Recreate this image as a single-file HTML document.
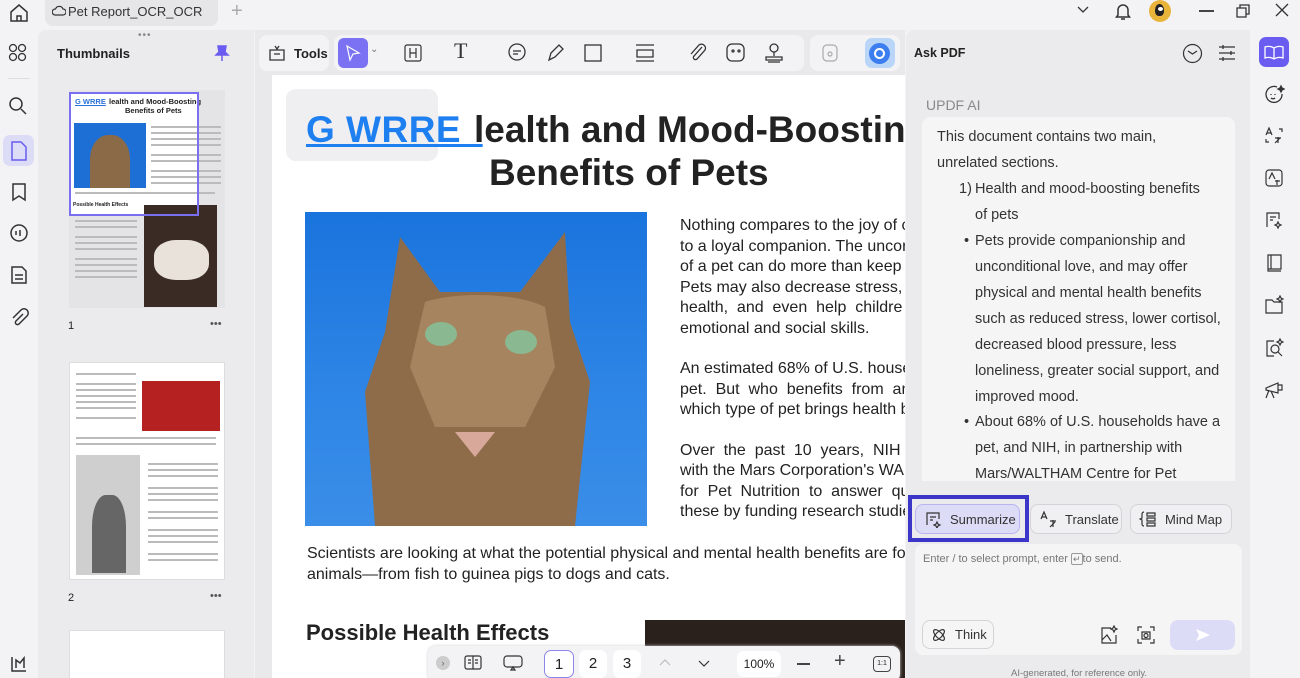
<!DOCTYPE html>
<html><head><meta charset="utf-8"><style>
*{box-sizing:border-box;margin:0;padding:0}
html,body{width:1300px;height:678px;overflow:hidden}
body{background:#f3f3f5;font-family:"Liberation Sans",sans-serif;position:relative;color:#222}
.a{position:absolute}
.ic{position:absolute;fill:none;stroke:#333;stroke-width:1.5}
.doc p{font-size:16px;line-height:20.5px;text-align:justify}
.rt{font-size:14.5px;line-height:26px;color:#333}
.btn{position:absolute;border:1px solid #d4d4d8;border-radius:8px;background:#f0f0f2;font-size:13px;color:#333;display:flex;align-items:center;gap:8px;padding-left:8px}
.tx{position:absolute;height:2px;background:#bbb}
</style></head><body>
<svg class="ic" style="left:8px;top:2px" width="22" height="22" viewBox="0 0 22 22"><path d="M3 10L11 3l8 7v9H3z M9 19v-5h4v5"/></svg>
<div class="a" style="left:45px;top:0;width:173px;height:26px;background:#e6e6e9;border-radius:0 0 8px 8px"></div>
<svg class="ic" style="left:52px;top:5px;stroke-width:1.2" width="14" height="12" viewBox="0 0 14 12"><path d="M3 10h8a3 3 0 0 0 0-6 4 4 0 0 0-7.5 0A3 3 0 0 0 3 10z"/></svg>
<div class="a" style="left:68px;top:4px;font-size:13px;color:#333">Pet Report_OCR_OCR</div>
<div class="a" style="left:231px;top:0;font-size:20px;color:#aaa">+</div>
<svg class="ic" style="left:1076px;top:5px;stroke-width:1.3" width="14" height="10"><path d="M2 2l5 5 5-5"/></svg>
<svg class="ic" style="left:1113px;top:1px" width="20" height="20" viewBox="0 0 20 20"><path d="M5 14V9a5 5 0 0 1 10 0v5l1.5 2h-13z M8 18h4"/></svg>
<div class="a" style="left:1149px;top:0;width:22px;height:22px;border-radius:50%;background:#e8b43a"><div class="a" style="left:6px;top:4px;width:9px;height:12px;background:#222;border-radius:50% 50% 40% 40%"></div><div class="a" style="left:9px;top:7px;width:5px;height:4px;background:#fff;border-radius:50%"></div></div>
<div class="a" style="left:1199px;top:10px;width:15px;height:1.5px;background:#444"></div>
<svg class="ic" style="left:1235px;top:3px;stroke-width:1.3" width="16" height="16"><path d="M2 5h9v9H2z M5 5V2h9v9h-3"/></svg>
<svg class="ic" style="left:1275px;top:3px;stroke-width:1.3" width="14" height="14"><path d="M1 1l12 12M13 1L1 13"/></svg>
<div class="a" style="left:38px;top:30px;width:216px;height:648px;background:#ebebed;border-radius:8px 0 0 0"></div>
<svg class="ic" style="left:8px;top:43px;stroke-width:1.3" width="20" height="20"><circle cx="5" cy="5" r="3.5"/><circle cx="14" cy="5" r="3.5"/><circle cx="5" cy="14" r="3.5"/><circle cx="14" cy="14" r="3.5"/></svg>
<div class="a" style="left:8px;top:78px;width:22px;height:1px;background:#ddd"></div>
<svg class="ic" style="left:8px;top:96px" width="20" height="20"><circle cx="8" cy="8" r="6"/><path d="M13 13l5 5"/></svg>
<div class="a" style="left:3px;top:135px;width:31px;height:31px;border-radius:7px;background:#dcdcf7"></div>
<svg class="ic" style="left:9px;top:140px;stroke:#6a5cf0" width="20" height="22"><path d="M3 2h9l5 5v13H3z"/></svg>
<svg class="ic" style="left:9px;top:182px" width="20" height="20"><path d="M4 2h12v16l-6-4-6 4z"/></svg>
<svg class="ic" style="left:8px;top:223px" width="22" height="22"><circle cx="11" cy="10" r="8"/><path d="M8 8v4M12 7v6"/></svg>
<svg class="ic" style="left:9px;top:265px" width="20" height="20"><path d="M3 2h10l4 4v12H3z M6 10h8M6 14h8"/></svg>
<svg class="ic" style="left:9px;top:308px" width="20" height="20"><path d="M14 6l-7 7a2 2 0 0 0 3 3l8-8a4 4 0 0 0-6-6L4 10"/></svg>
<svg class="ic" style="left:9px;top:654px" width="20" height="20"><path d="M3 3v14h14 M7 14V6l4 3 4-5v10"/></svg>
<div class="a" style="left:138px;top:30px;font-size:10px;color:#888;letter-spacing:1px">•••</div>
<div class="a" style="left:57px;top:46px;font-size:13px;font-weight:bold">Thumbnails</div>
<svg class="a" style="left:213px;top:44px" width="18" height="18"><path d="M5 2h8l-1 6 3 3H3l3-3z M9 11v6" fill="#6a5cf0" stroke="#6a5cf0" stroke-width="1.5"/></svg>
<div class="a" style="left:69px;top:90px;width:156px;height:218px;background:#e4e4e6;overflow:hidden">
  <div class="a" style="left:2px;top:2px;width:128px;height:124px;background:#fff"></div>
  <div class="a" style="left:6px;top:7px;font-size:7.5px;font-weight:bold;color:#2a72d8;text-decoration:underline">G WRRE</div>
  <div class="a" style="left:40px;top:7px;font-size:7.5px;font-weight:bold;white-space:nowrap">lealth and Mood-Boosting</div>
  <div class="a" style="left:56px;top:16px;font-size:7.5px;font-weight:bold">Benefits of Pets</div>
  <div class="a" style="left:5px;top:33px;width:72px;height:65px;background:#1d6fd6"><div class="a" style="left:16px;top:12px;width:40px;height:53px;background:#8b6a48;border-radius:45% 45% 0 0"></div></div>
  <div class="tx" style="left:82px;top:36px;width:70px"></div><div class="tx" style="left:82px;top:42px;width:70px"></div><div class="tx" style="left:82px;top:48px;width:70px"></div><div class="tx" style="left:82px;top:54px;width:70px"></div><div class="tx" style="left:82px;top:64px;width:70px"></div><div class="tx" style="left:82px;top:70px;width:70px"></div><div class="tx" style="left:82px;top:80px;width:70px"></div><div class="tx" style="left:82px;top:86px;width:70px"></div><div class="tx" style="left:82px;top:92px;width:70px"></div>
  <div class="tx" style="left:6px;top:102px;width:140px"></div>
  <div class="a" style="left:75px;top:115px;width:73px;height:102px;background:#3a2c24"><div class="a" style="left:10px;top:35px;width:55px;height:40px;background:#e8e2da;border-radius:40%"></div></div>
  <div class="a" style="left:4px;top:112px;font-size:5px;font-weight:bold">Possible Health Effects</div>
  <div class="tx" style="left:6px;top:130px;width:62px"></div><div class="tx" style="left:6px;top:136px;width:62px"></div><div class="tx" style="left:6px;top:146px;width:62px"></div><div class="tx" style="left:6px;top:152px;width:62px"></div><div class="tx" style="left:6px;top:158px;width:62px"></div><div class="tx" style="left:6px;top:168px;width:62px"></div><div class="tx" style="left:6px;top:174px;width:62px"></div><div class="tx" style="left:6px;top:180px;width:62px"></div><div class="tx" style="left:6px;top:186px;width:62px"></div>
</div>
<div class="a" style="left:69px;top:92px;width:130px;height:124px;border:2px solid #7a6ff0"></div>
<div class="a" style="left:68px;top:320px;font-size:11px">1</div>
<div class="a" style="left:210px;top:318px;font-size:11px;color:#555">•••</div>
<div class="a" style="left:69px;top:362px;width:156px;height:218px;background:#fff;border:1px solid #ddd">
  <div class="tx" style="left:6px;top:10px;width:60px"></div><div class="tx" style="left:6px;top:20px;width:60px"></div><div class="tx" style="left:6px;top:26px;width:60px"></div><div class="tx" style="left:6px;top:32px;width:60px"></div><div class="tx" style="left:6px;top:38px;width:60px"></div><div class="tx" style="left:6px;top:44px;width:60px"></div><div class="tx" style="left:6px;top:54px;width:60px"></div><div class="tx" style="left:6px;top:74px;width:140px"></div><div class="tx" style="left:6px;top:80px;width:140px"></div>
  <div class="a" style="left:72px;top:18px;width:78px;height:50px;background:#b52020"></div>
  <div class="a" style="left:6px;top:92px;width:64px;height:120px;background:#cfcfcf"><div class="a" style="left:16px;top:40px;width:34px;height:78px;background:#666;border-radius:40% 40% 0 0"></div></div>
  <div class="tx" style="left:78px;top:100px;width:70px"></div><div class="tx" style="left:78px;top:106px;width:70px"></div><div class="tx" style="left:78px;top:112px;width:70px"></div><div class="tx" style="left:78px;top:124px;width:70px"></div><div class="tx" style="left:78px;top:130px;width:70px"></div><div class="tx" style="left:78px;top:136px;width:70px"></div><div class="tx" style="left:78px;top:148px;width:70px"></div><div class="tx" style="left:78px;top:154px;width:70px"></div><div class="tx" style="left:78px;top:166px;width:70px"></div><div class="tx" style="left:78px;top:172px;width:70px"></div><div class="tx" style="left:78px;top:178px;width:70px"></div><div class="tx" style="left:78px;top:190px;width:70px"></div><div class="tx" style="left:78px;top:196px;width:70px"></div>
</div>
<div class="a" style="left:68px;top:592px;font-size:11px">2</div>
<div class="a" style="left:210px;top:590px;font-size:11px;color:#555">•••</div>
<div class="a" style="left:69px;top:630px;width:156px;height:60px;background:#fff;border:1px solid #ddd"></div>
<div class="a" style="left:255px;top:30px;width:650px;height:648px;background:#e9e9ec"></div>
<div class="a" style="left:259px;top:35px;width:70px;height:36px;background:#f3f3f5;border-radius:8px"></div>
<svg class="ic" style="left:267px;top:43px;stroke-width:1.3" width="20" height="20"><path d="M3 7h14v10H3z M7 11h6 M8 3l2 3 2-3"/></svg>
<div class="a" style="left:294px;top:46px;font-size:13px;font-weight:bold">Tools</div>
<div class="a" style="left:334px;top:35px;width:470px;height:36px;background:#f3f3f5;border-radius:8px"></div>
<div class="a" style="left:338px;top:38px;width:30px;height:30px;background:#7a72f2;border-radius:6px"></div>
<svg class="ic" style="left:344px;top:44px;stroke:#fff;stroke-width:1.2" width="18" height="18"><path d="M3 2l12 7-6 1-3 6z"/></svg>
<div class="a" style="left:370px;top:44px;font-size:10px;color:#777">⌄</div>
<svg class="ic" style="left:403px;top:43px;stroke-width:1.2" width="20" height="20"><rect x="2" y="2" width="16" height="16" rx="2"/><path d="M7 5v10M13 5v10M7 10h6"/></svg>
<div class="a" style="left:454px;top:38px;font-size:22px;font-family:'Liberation Serif';color:#333">T</div>
<svg class="ic" style="left:506px;top:42px;stroke-width:1.3" width="22" height="22"><circle cx="11" cy="10" r="8"/><path d="M7 9h8M7 12h5"/></svg>
<svg class="ic" style="left:545px;top:42px;stroke-width:1.3" width="22" height="22"><path d="M4 18l2-7 8-8 4 4-8 8z"/></svg>
<svg class="ic" style="left:584px;top:44px;stroke-width:1.3" width="18" height="18"><rect x="1" y="1" width="16" height="16"/></svg>
<svg class="ic" style="left:634px;top:42px;stroke-width:1.3" width="22" height="22"><path d="M2 3h18M2 19h18M3 8h16v7H3z"/></svg>
<svg class="ic" style="left:688px;top:42px;stroke-width:1.3" width="20" height="22"><path d="M14 5l-8 9a2 2 0 0 0 3 3l8-9a4 4 0 0 0-6-5L3 12"/></svg>
<svg class="ic" style="left:725px;top:42px;stroke-width:1.3" width="22" height="22"><rect x="2" y="2" width="17" height="17" rx="5"/><circle cx="8" cy="9" r="1"/><circle cx="14" cy="9" r="1"/></svg>
<svg class="ic" style="left:763px;top:42px;stroke-width:1.3" width="22" height="22"><circle cx="11" cy="6" r="4"/><path d="M11 10v4M3 15h16v3H3zM5 20h12"/></svg>
<div class="a" style="left:810px;top:35px;width:90px;height:36px;background:#f3f3f5;border-radius:8px"></div>
<svg class="ic" style="left:821px;top:43px;stroke:#aaa;stroke-width:1.2" width="18" height="20"><rect x="2" y="2" width="14" height="16" rx="4"/><circle cx="9" cy="11" r="2"/></svg>
<div class="a" style="left:865px;top:38px;width:30px;height:30px;border-radius:7px;background:#b9d6f8"></div>
<div class="a" style="left:869px;top:43px;width:21px;height:21px;border-radius:50%;background:#3c7ef0"></div>
<div class="a" style="left:874px;top:48px;width:11px;height:11px;border-radius:50%;border:2px solid #fff"></div>
<div class="a doc" style="left:272px;top:75px;width:633px;height:603px;background:#fff;overflow:hidden">
  <div class="a" style="left:14px;top:14px;width:152px;height:72px;background:#efeff1;border-radius:10px"></div>
  <div class="a" style="left:34px;top:34px;font-size:37px;font-weight:bold;color:#1e7ff0;text-decoration:underline;letter-spacing:0.5px;white-space:pre">G WRRE  </div>
  <div class="a" style="left:202px;top:34px;font-size:37px;font-weight:bold;white-space:nowrap">lealth and Mood-Boosting</div>
  <div class="a" style="left:217px;top:77px;font-size:37px;font-weight:bold">Benefits of Pets</div>
  <div class="a" style="left:33px;top:137px;width:342px;height:314px;background:linear-gradient(180deg,#1a74dd,#2f86e6 60%,#3a8ee8);overflow:hidden">
    <svg class="a" style="left:0;top:0" width="342" height="314"><path d="M95 25l40 55h80l45-60 5 90 20 60-15 144H70L60 180l20-60z" fill="#8e6c4a"/><path d="M120 90c30-10 90-10 120 5l10 60-30 60h-90l-25-60z" fill="#a5845f"/><path d="M150 220l40 0-20 25z" fill="#d8a89a"/></svg>
    <div class="a" style="left:120px;top:110px;width:32px;height:24px;background:#8ab890;border-radius:50%"></div>
    <div class="a" style="left:200px;top:118px;width:32px;height:24px;background:#8ab890;border-radius:50%"></div>
  </div>
  <div class="a" style="left:408px;top:141px;width:260px;white-space:nowrap"><p>Nothing compares to the joy of c<br>to a loyal companion. The uncor<br>of a pet can do more than keep y<br>Pets may also decrease stress, i<br>health,&nbsp; and&nbsp; even&nbsp; help&nbsp; childre<br>emotional and social skills.</p>
  <p style="margin-top:20px">An estimated 68% of U.S. house<br>pet.&nbsp; But&nbsp; who&nbsp; benefits&nbsp; from&nbsp; an<br>which type of pet brings health be</p>
  <p style="margin-top:20px">Over&nbsp; the&nbsp; past&nbsp; 10&nbsp; years,&nbsp; NIH&nbsp; ha<br>with the Mars Corporation's WALT<br>for&nbsp; Pet&nbsp; Nutrition&nbsp; to&nbsp; answer&nbsp; qu<br>these by funding research studies</p></div>
  <div class="a" style="left:35px;top:469px;white-space:nowrap"><p>Scientists are looking at what the potential physical and mental health benefits are for dif<br>animals—from fish to guinea pigs to dogs and cats.</p></div>
  <div class="a" style="left:34px;top:545px;font-size:22px;font-weight:bold">Possible Health Effects</div>
  <div class="a" style="left:373px;top:545px;width:260px;height:60px;background:#2a211c"></div>
</div>
<div class="a" style="left:428px;top:646px;width:472px;height:36px;background:#f3f3f5;border-radius:8px;box-shadow:0 0 3px #ccc"></div>
<div class="a" style="left:436px;top:656px;width:14px;height:14px;border-radius:50%;background:#ccc;font-size:9px;color:#666;text-align:center;line-height:14px">›</div>
<svg class="ic" style="left:463px;top:654px;stroke-width:1.2" width="20" height="18"><rect x="2" y="2" width="16" height="13" rx="2"/><path d="M10 2v13M5 6h3M5 9h3M12 6h3M12 9h3"/></svg>
<svg class="ic" style="left:502px;top:654px;stroke-width:1.2" width="22" height="18"><rect x="2" y="2" width="18" height="11" rx="3"/><path d="M9 16l2-3 2 3z"/></svg>
<div class="a" style="left:544px;top:650px;width:30px;height:28px;border:1px solid #8d86e8;border-radius:7px;background:#fff;font-size:15px;text-align:center;line-height:28px">1</div>
<div class="a" style="left:579px;top:650px;width:28px;height:28px;border-radius:7px;background:#fff;font-size:15px;text-align:center;line-height:28px">2</div>
<div class="a" style="left:613px;top:650px;width:28px;height:28px;border-radius:7px;background:#fff;font-size:15px;text-align:center;line-height:28px">3</div>
<svg class="ic" style="left:658px;top:657px;stroke:#bbb;stroke-width:1.2" width="14" height="10"><path d="M2 8l5-5 5 5"/></svg>
<svg class="ic" style="left:697px;top:659px;stroke-width:1.2" width="14" height="10"><path d="M2 2l5 5 5-5"/></svg>
<div class="a" style="left:737px;top:651px;width:44px;height:26px;border-radius:7px;background:#fff;font-size:12px;text-align:center;line-height:26px">100%</div>
<div class="a" style="left:797px;top:663px;width:13px;height:1.5px;background:#444"></div>
<div class="a" style="left:834px;top:650px;font-size:20px;color:#444">+</div>
<div class="a" style="left:873px;top:656px;width:18px;height:16px;border:1.3px solid #444;border-radius:4px;font-size:7px;text-align:center;line-height:14px">1:1</div>
<div class="a" style="left:906px;top:30px;width:344px;height:648px;background:#ebebed;border-radius:8px 0 0 0"></div>
<div class="a" style="left:914px;top:46px;font-size:12.5px;font-weight:bold">Ask PDF</div>
<svg class="ic" style="left:1182px;top:43px;stroke-width:1.2" width="21" height="21"><circle cx="10.5" cy="10.5" r="9"/><path d="M6 8l4.5 3 4.5-3"/></svg>
<svg class="ic" style="left:1217px;top:43px;stroke-width:1.3" width="20" height="20"><path d="M2 4h16M2 10h16M2 16h16M6 2v4M14 8v4M6 14v4"/></svg>
<div class="a" style="left:926px;top:97px;font-size:14px;color:#888">UPDF AI</div>
<div class="a" style="left:922px;top:117px;width:313px;height:364px;background:#f5f5f6;border-radius:8px 8px 0 0"></div>
<div class="a rt" style="left:937px;top:124px">This document contains two main,<br>unrelated sections.</div>
<div class="a rt" style="left:959px;top:176px">1)</div>
<div class="a rt" style="left:975px;top:176px;white-space:nowrap">Health and mood-boosting benefits<br>of pets</div>
<div class="a rt" style="left:964px;top:228px">•</div>
<div class="a rt" style="left:975px;top:228px;white-space:nowrap">Pets provide companionship and<br>unconditional love, and may offer<br>physical and mental health benefits<br>such as reduced stress, lower cortisol,<br>decreased blood pressure, less<br>loneliness, greater social support, and<br>improved mood.</div>
<div class="a rt" style="left:964px;top:409px">•</div>
<div class="a rt" style="left:975px;top:409px;white-space:nowrap;height:72px;overflow:hidden">About 68% of U.S. households have a<br>pet, and NIH, in partnership with<br>Mars/WALTHAM Centre for Pet</div>
<div class="a" style="left:908px;top:495px;width:121px;height:47px;border:4px solid #3b35c8"></div>
<div class="btn" style="left:915px;top:504px;width:105px;height:30px;background:#dcdcf7;border-color:#b9b5f0"><svg class="ic" style="position:static;stroke-width:1.2" width="18" height="18"><path d="M3 15V3h12v6M6 7h6M6 10h3M13 12l1 2 2 1-2 1-1 2-1-2-2-1 2-1z"/></svg>Summarize</div>
<div class="btn" style="left:1030px;top:504px;width:92px;height:30px"><svg class="ic" style="position:static;stroke-width:1.2" width="18" height="18"><path d="M2 9l3-7 3 7M3 7h4M11 11h6M14 10v7M11 17l5-5"/></svg>Translate</div>
<div class="btn" style="left:1130px;top:504px;width:102px;height:30px"><svg class="ic" style="position:static;stroke-width:1.2" width="18" height="18"><path d="M5 2a2 2 0 0 0-2 2v4l-2 1 2 1v4a2 2 0 0 0 2 2M8 3h8v3H8zM8 8h8v3H8zM8 13h8v3H8z"/></svg>Mind Map</div>
<div class="a" style="left:915px;top:544px;width:327px;height:111px;background:#f5f5f6;border-radius:8px"></div>
<div class="a" style="left:923px;top:553px;font-size:11px;color:#777">Enter / to select prompt, enter <span style="border:1px solid #999;border-radius:2px;font-size:9px;padding:0 1px">↵</span>to send.</div>
<div class="btn" style="left:922px;top:620px;width:72px;height:29px;background:#f5f5f6"><svg class="ic" style="position:static;stroke-width:1.2" width="16" height="16"><ellipse cx="8" cy="8" rx="7" ry="3" transform="rotate(45 8 8)"/><ellipse cx="8" cy="8" rx="7" ry="3" transform="rotate(-45 8 8)"/></svg>Think</div>
<svg class="ic" style="left:1099px;top:625px;stroke-width:1.2" width="20" height="20"><path d="M12 3H3v15h14v-8M3 15l5-5 4 6M15 1l1 2 2 1-2 1-1 2-1-2-2-1 2-1z"/></svg>
<svg class="ic" style="left:1136px;top:625px;stroke-width:1.2" width="20" height="20"><path d="M2 6V2h4M14 2h4v4M18 14v4h-4M6 18H2v-4M6 7h8v7H6z"/><circle cx="10" cy="10.5" r="2"/></svg>
<div class="a" style="left:1170px;top:620px;width:65px;height:30px;background:#dcdcf7;border-radius:8px"></div>
<svg class="a" style="left:1195px;top:628px" width="16" height="14"><path d="M1 1l14 6-14 6 3-6z" fill="#fff"/></svg>
<div class="a" style="left:1011px;top:668px;font-size:9.5px;color:#777">AI-generated, for reference only.</div>
<div class="a" style="left:1259px;top:37px;width:30px;height:30px;background:#6a5cf0;border-radius:7px"></div>
<svg class="ic" style="left:1263px;top:42px;stroke:#fff;stroke-width:1.3" width="22" height="20"><path d="M2 5c3-1 6-1 9 1 3-2 6-2 9-1v11c-3-1-6-1-9 1-3-2-6-2-9-1zM11 6v11"/></svg>
<svg class="ic" style="left:1263px;top:84px;stroke-width:1.3" width="22" height="22"><path d="M14 3a8 8 0 1 0 5 7M8 10v1M12 10v1M8 14c1 1 3 1 4 0"/><path d="M18 2l1 2 2 1-2 1-1 2-1-2-2-1 2-1z" fill="#333"/></svg>
<svg class="ic" style="left:1264px;top:126px;stroke-width:1.2" width="20" height="20"><path d="M2 9l3-7 3 7M3 7h4M11 12h6M14 11v6M11 17l5-5M2 13v3h3M15 3h3v3"/></svg>
<svg class="ic" style="left:1264px;top:168px;stroke-width:1.2" width="20" height="20"><rect x="2" y="2" width="16" height="16" rx="3"/><path d="M5 11l3-6 3 6M11 13h5M13 12v5"/></svg>
<svg class="ic" style="left:1264px;top:210px;stroke-width:1.2" width="20" height="20"><path d="M3 17V3h12v6M6 7h6M6 10h3M14 12l1 2 2 1-2 1-1 2-1-2-2-1 2-1z"/></svg>
<svg class="ic" style="left:1264px;top:253px;stroke-width:1.2" width="20" height="20"><path d="M4 2h13v14H4zM4 16v2h13M7 2v14"/></svg>
<svg class="ic" style="left:1264px;top:295px;stroke-width:1.2" width="20" height="20"><path d="M2 5h6l2 2h8v11H2zM16 1l1 2 2 1-2 1-1 2-1-2-2-1 2-1z"/></svg>
<svg class="ic" style="left:1264px;top:338px;stroke-width:1.2" width="20" height="20"><path d="M10 3H3v15h7"/><circle cx="11" cy="11" r="4"/><path d="M14 14l4 4M16 1l1 2 2 1-2 1-1 2-1-2-2-1 2-1z"/></svg>
<svg class="ic" style="left:1263px;top:380px;stroke-width:1.2" width="22" height="20"><path d="M3 8l12-5v10L3 10zM15 5h4v5h-4M6 10l-3 8M8 11l3 7"/></svg>
</body></html>
